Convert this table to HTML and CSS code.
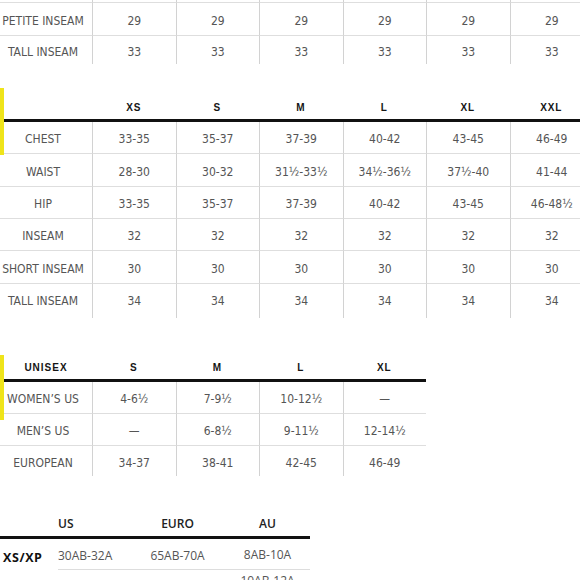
FILE: index.html
```html
<!DOCTYPE html>
<html>
<head>
<meta charset="utf-8">
<link rel="stylesheet" href="styles.css">
</head>
<body>
<div class="page">

  <section class="block block-top">
    <table class="chart chart-wide">
      <colgroup><col class="c-label"><col class="c-size"><col class="c-size"><col class="c-size"><col class="c-size"><col class="c-size"><col class="c-size"></colgroup>
      <tbody>
        <tr class="stub"><td></td><td></td><td></td><td></td><td></td><td></td><td></td></tr>
        <tr class="r33"><td>PETITE INSEAM</td><td>29</td><td>29</td><td>29</td><td>29</td><td>29</td><td>29</td></tr>
        <tr class="end end-short"><td>TALL INSEAM</td><td>33</td><td>33</td><td>33</td><td>33</td><td>33</td><td>33</td></tr>
      </tbody>
    </table>
  </section>

  <section class="block block-men marked marked-men">
    <table class="chart chart-wide">
      <colgroup><col class="c-label"><col class="c-size"><col class="c-size"><col class="c-size"><col class="c-size"><col class="c-size"><col class="c-size"></colgroup>
      <thead>
        <tr class="head head-tall"><th></th><th>XS</th><th>S</th><th>M</th><th>L</th><th>XL</th><th>XXL</th></tr>
      </thead>
      <tbody>
        <tr><td>CHEST</td><td>33-35</td><td>35-37</td><td>37-39</td><td>40-42</td><td>43-45</td><td>46-49</td></tr>
        <tr class="r33"><td>WAIST</td><td>28-30</td><td>30-32</td><td>31½-33½</td><td>34½-36½</td><td>37½-40</td><td>41-44</td></tr>
        <tr><td>HIP</td><td>33-35</td><td>35-37</td><td>37-39</td><td>40-42</td><td>43-45</td><td>46-48½</td></tr>
        <tr><td>INSEAM</td><td>32</td><td>32</td><td>32</td><td>32</td><td>32</td><td>32</td></tr>
        <tr class="r33"><td>SHORT INSEAM</td><td>30</td><td>30</td><td>30</td><td>30</td><td>30</td><td>30</td></tr>
        <tr class="end end-tall"><td>TALL INSEAM</td><td>34</td><td>34</td><td>34</td><td>34</td><td>34</td><td>34</td></tr>
      </tbody>
    </table>
  </section>

  <section class="block block-unisex marked marked-unisex">
    <table class="chart chart-unisex">
      <colgroup><col class="c-label"><col class="c-size"><col class="c-size"><col class="c-size"><col class="c-size"></colgroup>
      <thead>
        <tr class="head head-short"><th class="label-head">UNISEX</th><th>S</th><th>M</th><th>L</th><th>XL</th></tr>
      </thead>
      <tbody>
        <tr><td>WOMEN’S US</td><td>4-6½</td><td>7-9½</td><td>10-12½</td><td>—</td></tr>
        <tr><td>MEN’S US</td><td>—</td><td>6-8½</td><td>9-11½</td><td>12-14½</td></tr>
        <tr class="end end-mid"><td>EUROPEAN</td><td>34-37</td><td>38-41</td><td>42-45</td><td>46-49</td></tr>
      </tbody>
    </table>
  </section>

  <section class="block block-bra">
    <table class="bra">
      <colgroup><col class="b-label"><col class="b-us"><col class="b-euro"><col class="b-au"></colgroup>
      <thead>
        <tr><th></th><th class="left">US</th><th>EURO</th><th>AU</th></tr>
      </thead>
      <tbody>
        <tr><td class="size">XS/XP</td><td class="left line">30AB-32A</td><td class="line">65AB-70A</td><td class="line up">8AB-10A</td></tr>
        <tr class="next"><td class="size">S/P</td><td class="left">32AB-34A</td><td>70AB-75A</td><td class="up">10AB-12A</td></tr>
      </tbody>
    </table>
  </section>

</div>
</body>
</html>
```

FILE: styles.css
```css
html, body {
  margin: 0;
  padding: 0;
  overflow: hidden;
  background: #ffffff;
}

body {
  width: 580px;
  height: 580px;
  font-family: "Liberation Sans Narrow", "DejaVu Sans Condensed", "Liberation Sans", sans-serif;
  font-size: 12px;
  color: #555555;
}

.page {
  display: flex;
  flex-direction: column;
}

.block-men { margin-top: 24px; }
.block-unisex { margin-top: 37px; }
.block-bra { margin-top: 32px; }

/* yellow tab markers */
.marked { position: relative; }
.marked::before {
  content: "";
  position: absolute;
  left: 0;
  top: 0;
  width: 4px;
  background: #efe41a;
  z-index: 2;
}
.marked-men::before { height: 67px; }
.marked-unisex::before { height: 65px; }

/* size charts */
.chart {
  border-collapse: separate;
  border-spacing: 0;
  table-layout: fixed;
}
.chart-wide { width: 593px; }
.chart-unisex { width: 426px; }

.c-label { width: 92px; }
.c-size { width: 83.5px; }

.chart td,
.chart th {
  padding: 0;
  box-sizing: border-box;
  text-align: center;
  vertical-align: middle;
  white-space: nowrap;
  overflow: hidden;
}

.chart td {
  height: 32px;
  padding-top: 3px;
  border-bottom: 1px solid #dedede;
  border-left: 1px solid #d2d2d2;
  line-height: 14px;
}
.chart td:first-child {
  border-left: none;
  padding-right: 6px;
}

.chart .r33 td { height: 33px; }

.chart .stub td { height: 3px; padding-top: 0; }

.chart .end td { border-bottom: none; }
.chart .end-short td { height: 28px; padding-top: 3px; }
.chart .end-tall td { height: 34px; padding-top: 0; }
.chart .end-mid td { height: 30px; padding-top: 3px; }

.chart th {
  font-family: "Liberation Sans", Arial, sans-serif;
  font-weight: bold;
  font-size: 10px;
  letter-spacing: 0.8px;
  color: #151515;
  border-bottom: 3px solid #111111;
}
.chart .head-tall th {
  height: 34px;
  padding-top: 7px;
}
.chart .head-short th {
  height: 27px;
  padding-top: 1px;
}
.chart .label-head {
  letter-spacing: 1px;
}

/* bra chart */
.bra {
  width: 310px;
  border-collapse: separate;
  border-spacing: 0;
  table-layout: fixed;
  font-family: "Open Sans", "Liberation Sans", sans-serif;
  font-size: 12px;
  color: #555555;
}
.b-label { width: 58px; }
.b-us { width: 72px; }
.b-euro { width: 95px; }
.b-au { width: 85px; }

.bra th,
.bra td {
  padding: 0;
  box-sizing: border-box;
  text-align: center;
  vertical-align: middle;
  white-space: nowrap;
}
.bra th {
  height: 31px;
  padding-top: 3px;
  font-weight: 600;
  color: #222222;
  border-bottom: 3px solid #111111;
}
.bra td {
  height: 31px;
  padding-top: 3px;
}
.bra .left { text-align: left; }
.bra td.line { border-bottom: 1px solid #dddddd; }
.bra td.up { padding-top: 0; }
.bra td.size {
  text-align: left;
  padding-left: 3px;
  padding-top: 5px;
  font-weight: bold;
  font-size: 12.5px;
  letter-spacing: 0.6px;
  color: #111111;
}
.bra .next td { vertical-align: top; padding-top: 12px; }
.bra .next td.size { padding-top: 13px; }
.bra .next td.up { padding-top: 2px; }
```
